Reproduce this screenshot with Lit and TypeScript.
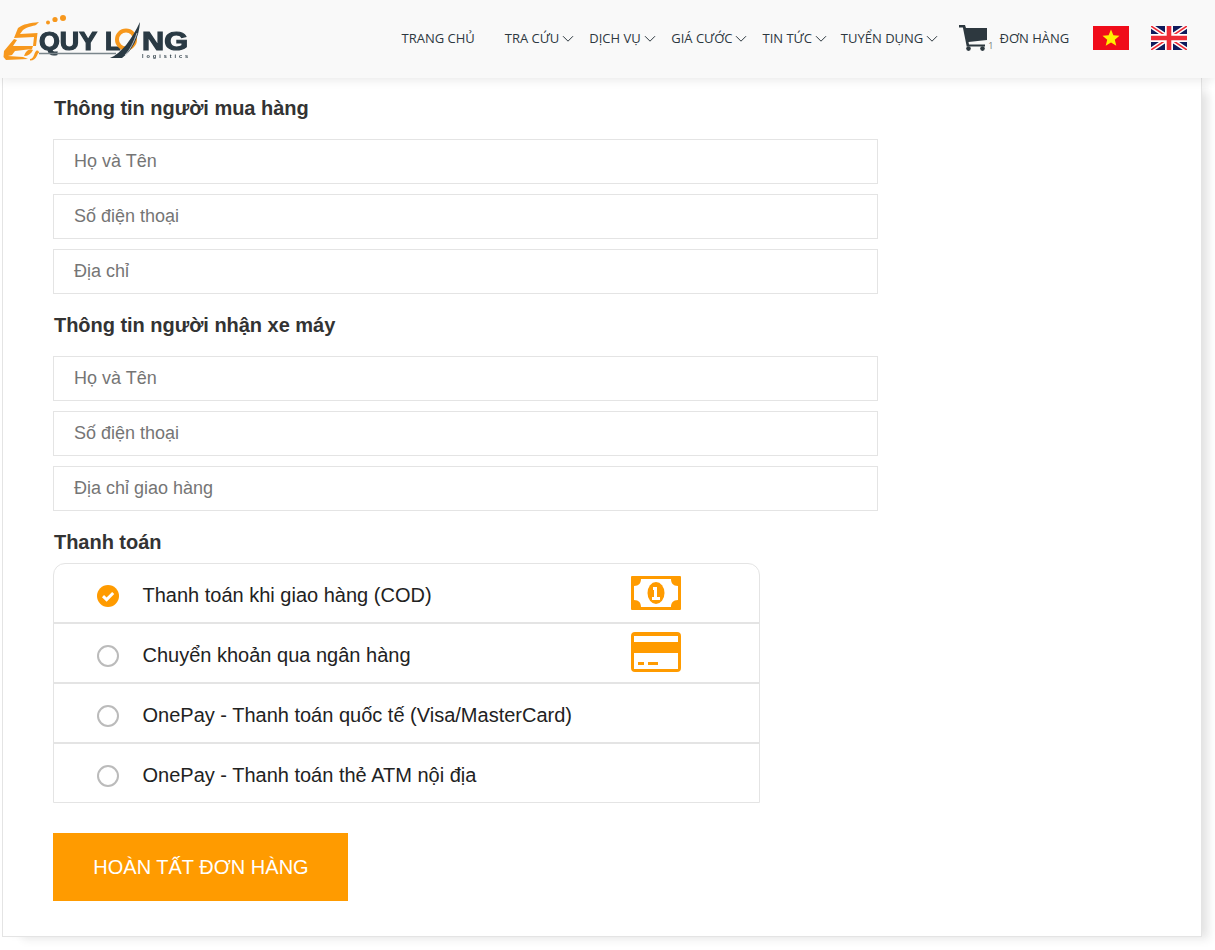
import { LitElement, html, css, svg } from "lit";
import { customElement } from "lit/decorators.js";

const chevron = svg`<svg class="chev" width="12" height="8" viewBox="0 0 12 8"><path d="M1 1.2 6 6.2 11 1.2" fill="none" stroke="#2d383f" stroke-width="1"/></svg>`;

@customElement("app-root")
export class AppRoot extends LitElement {
  static styles = css`
    :host { display: block; width: 1215px; height: 950px; overflow: hidden; background: #fff; font-family: "Liberation Sans", Arial, sans-serif; color: #333; }
    header { position: relative; z-index: 2; height: 78px; box-sizing: border-box; padding-bottom: 2px; background: #f9f9f9; box-shadow: 0 2px 10px rgba(0,0,0,.09); display: flex; align-items: center; font-family: "Open Sans", sans-serif; font-size: 13px; color: #2d383f; }
    .logo { width: 192px; height: 52px; margin: 2px 0 0 3px; flex: none; display: block; filter: blur(.3px); }
    nav { display: flex; align-items: center; margin-left: 206.5px; }
    .item { display: flex; align-items: center; white-space: nowrap; }
    .chev { margin-left: 3px; margin-top: 1px; }
    .home { margin-right: 30px; }
    .m1 { margin-right: 15px; }
    .m2 { margin-right: 15.5px; }
    .m3 { margin-right: 15px; }
    .m4 { margin-right: 14px; }
    .m5 { margin-right: 21px; }
    .cart { display: flex; align-items: center; }
    .cart svg { display: block; }
    .count { font-size: 9px; color: #777; margin: 15px 6px 0 1px; }
    .flag { display: block; flex: none; }
    .vn { margin-left: 23.5px; }
    .uk { margin-left: 22px; }
    main { width: 1200px; height: 859px; margin-left: 2px; box-sizing: border-box; background: #fff; border: 1px solid #e4e4e4; border-top: 0; box-shadow: 6px 0 8px -2px rgba(0,0,0,.06), 14px 10px 8px -6px rgba(0,0,0,.06); padding: 18px 0 0 50px; }
    h2 { margin: 0; font-size: 20px; line-height: 24px; font-weight: 700; color: #333; padding-left: 1px; letter-spacing: -.03px; }
    .fields { display: flex; flex-direction: column; gap: 10px; margin: 19px 0 19px; }
    .field { width: 825px; height: 45px; box-sizing: border-box; border: 1px solid #e4e4e4; padding: 0 20px; font: 18px "Liberation Sans", Arial, sans-serif; color: #757575; display: flex; align-items: center; background: #fff; }
    .pay { width: 707px; box-sizing: border-box; margin-top: 9px; border: 1px solid #e4e4e4; border-top-left-radius: 12px; border-top-right-radius: 12px; }
    .row { height: 60px; box-sizing: border-box; display: flex; align-items: center; padding-left: 43px; font-size: 20px; color: #222; border-bottom: 2px solid #e4e4e4; }
    .row:last-child { border-bottom: 0; height: 58px; }
    .radio { width: 22px; height: 22px; flex: none; margin: 6px 23.5px 0 0; display: block; }
    .label { width: 488.5px; flex: none; white-space: nowrap; margin-top: 4px; }
    .card-icon { margin-bottom: 2px; }
    button { display: block; width: 295px; height: 68px; margin-top: 30px; border: 0; background: #ff9b00; color: #fff; font: 20px "Liberation Sans", Arial, sans-serif; padding: 0 0 0 1px; }
  `;

  private field(t: string) { return html`<div class="field">${t}</div>`; }

  private radio(on: boolean) {
    return on
      ? html`<svg class="radio" viewBox="0 0 22 22"><circle cx="11" cy="11" r="11" fill="#ff9b00"/><path d="M6 11.2 9.6 14.6 16.2 8" fill="none" stroke="#fff" stroke-width="3"/></svg>`
      : html`<svg class="radio" viewBox="0 0 22 22"><circle cx="11" cy="11" r="10" fill="#fff" stroke="#bbb" stroke-width="2"/></svg>`;
  }

  render() {
    return html`
      <header>
        <svg class="logo" viewBox="0 0 192 52">
          <g fill="#f7981d">
            <path d="M36 9 C27 10 20 11 15 15 L11 25 L31 24 L30 33 L33 33 L34.5 20 L17 21 L20 17 C24 14 30 13 33 12Z"/>
            <path d="M1 38 L11 26 L14 27 L10 33 L30 33 L29 36 L12 38 L9 42 L5 43 L20 44 L25 46 L3 47 L0.5 44Z"/>
            <path d="M21 43 C23 37 27 35 30 37 C28 41 25 43 21 43Z"/>
            <path d="M27 46 C31 46 31 40 33 38 C35 37 36 38 36 40 C34 39 35 47 27 47.5Z"/>
            <circle cx="45" cy="9.5" r="2" /><circle cx="52" cy="6.5" r="2.6"/><circle cx="60" cy="5" r="3"/>
          </g>
          <text x="36" y="37" font-family="'Liberation Sans',sans-serif" font-weight="700" font-size="25.5" fill="#2a3a44" stroke="#2a3a44" stroke-width="1.2" textLength="58" lengthAdjust="spacingAndGlyphs">QUY</text>
          <text x="102" y="37" font-family="'Liberation Sans',sans-serif" font-weight="700" font-size="25.5" fill="#2a3a44" stroke="#2a3a44" stroke-width="1.2">L</text>
          <circle cx="123" cy="26.5" r="9" fill="none" stroke="#f7981d" stroke-width="4"/>
          <text x="139" y="37" font-family="'Liberation Sans',sans-serif" font-weight="700" font-size="25.5" fill="#2a3a44" stroke="#2a3a44" stroke-width="1.2" textLength="46" lengthAdjust="spacingAndGlyphs">NG</text>
          <path d="M36 40.5 L113 40.5" stroke="#7b868c" stroke-width="1.6"/>
          <path d="M107 45 C118 41 129 26 137 9 C136 25 129 38 119 45Z" fill="#2a3a44"/>
          <path d="M122 42 C127 37 131 29 134 20" fill="none" stroke="#f9f9f9" stroke-width=".7"/>
          <text x="139" y="44.5" font-family="'Liberation Sans',sans-serif" font-weight="700" font-size="5.5" fill="#2a3a44" textLength="46">logistics</text>
        </svg>
        <nav>
          <span class="item home">TRANG CHỦ</span>
          <span class="item m1">TRA CỨU${chevron}</span>
          <span class="item m2">DỊCH VỤ${chevron}</span>
          <span class="item m3">GIÁ CƯỚC${chevron}</span>
          <span class="item m4">TIN TỨC${chevron}</span>
          <span class="item m5">TUYỂN DỤNG${chevron}</span>
          <span class="cart">
            <svg width="28" height="26" viewBox="0 0 28 26"><path d="M0 0 H6 L7 3 H28 V15 L9.5 17 L10 19.5 H26 V21.5 H7.7 L3.9 2.4 H0Z" fill="#2d383f"/><circle cx="9.5" cy="23.6" r="2.3" fill="#2d383f"/><circle cx="23.5" cy="23.6" r="2.3" fill="#2d383f"/></svg>
            <span class="count">1</span>
            <span>ĐƠN HÀNG</span>
          </span>
          <svg class="flag vn" width="36" height="24" viewBox="0 0 36 24"><rect width="36" height="24" fill="#f00c1a"/><path d="M18 3.5 20.4 9.3 26.5 9.7 21.8 13.7 23.3 19.7 18 16.4 12.7 19.7 14.2 13.7 9.5 9.7 15.6 9.3Z" fill="#ffef00"/></svg>
          <svg class="flag uk" width="36" height="24" viewBox="0 0 36 24"><rect width="36" height="24" fill="#0f1a5c"/><path d="M0 0 36 24M36 0 0 24" stroke="#fff" stroke-width="4.6"/><path d="M0 0 36 24M36 0 0 24" stroke="#ee2b36" stroke-width="1.6"/><path d="M18 0V24M0 12H36" stroke="#fff" stroke-width="8"/><path d="M18 0V24M0 12H36" stroke="#ee2b36" stroke-width="4.6"/></svg>
        </nav>
      </header>
      <main>
        <h2>Thông tin người mua hàng</h2>
        <div class="fields">${["Họ và Tên", "Số điện thoại", "Địa chỉ"].map((t) => this.field(t))}</div>
        <h2>Thông tin người nhận xe máy</h2>
        <div class="fields">${["Họ và Tên", "Số điện thoại", "Địa chỉ giao hàng"].map((t) => this.field(t))}</div>
        <h2>Thanh toán</h2>
        <div class="pay">
          <div class="row">${this.radio(true)}<span class="label">Thanh toán khi giao hàng (COD)</span>
            <svg width="50" height="34" viewBox="0 0 50 34"><path fill-rule="evenodd" fill="#ff9b00" d="M1 0H49A1 1 0 0 1 50 1V33A1 1 0 0 1 49 34H1A1 1 0 0 1 0 33V1A1 1 0 0 1 1 0ZM10 3C10 7 8 10 3 10V24C8 24 10 27 10 31H40C40 27 42 24 47 24V10C42 10 40 7 40 3Z"/><ellipse cx="25" cy="17" rx="8.5" ry="11" fill="#ff9b00"/><path d="M22 11H26V21H29V24H21V21H23V14H22Z" fill="#fff"/></svg>
          </div>
          <div class="row">${this.radio(false)}<span class="label">Chuyển khoản qua ngân hàng</span>
            <svg class="card-icon" width="50" height="40" viewBox="0 0 50 40"><path fill-rule="evenodd" fill="#ff9b00" d="M4 0H46A4 4 0 0 1 50 4V36A4 4 0 0 1 46 40H4A4 4 0 0 1 0 36V4A4 4 0 0 1 4 0ZM3 4V10H47V4ZM3 21V37H47V21Z"/><rect x="7" y="30" width="6" height="3" fill="#ff9b00"/><rect x="17" y="30" width="10" height="3" fill="#ff9b00"/></svg>
          </div>
          <div class="row">${this.radio(false)}<span class="label">OnePay - Thanh toán quốc tế (Visa/MasterCard)</span></div>
          <div class="row">${this.radio(false)}<span class="label">OnePay - Thanh toán thẻ ATM nội địa</span></div>
        </div>
        <button>HOÀN TẤT ĐƠN HÀNG</button>
      </main>
    `;
  }
}
